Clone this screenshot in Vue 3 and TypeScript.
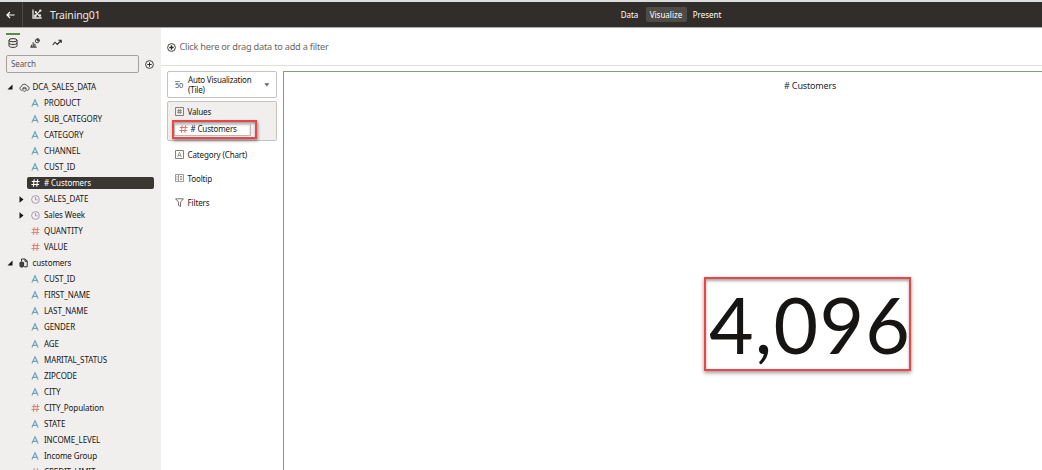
<script setup lang="ts">
interface Field {
  label: string
  kind: 'cloud' | 'file' | 'attr' | 'measure' | 'date'
  selected?: boolean
}

const fields: Field[] = [
  { label: 'DCA_SALES_DATA', kind: 'cloud' },
  { label: 'PRODUCT', kind: 'attr' },
  { label: 'SUB_CATEGORY', kind: 'attr' },
  { label: 'CATEGORY', kind: 'attr' },
  { label: 'CHANNEL', kind: 'attr' },
  { label: 'CUST_ID', kind: 'attr' },
  { label: '# Customers', kind: 'measure', selected: true },
  { label: 'SALES_DATE', kind: 'date' },
  { label: 'Sales Week', kind: 'date' },
  { label: 'QUANTITY', kind: 'measure' },
  { label: 'VALUE', kind: 'measure' },
  { label: 'customers', kind: 'file' },
  { label: 'CUST_ID', kind: 'attr' },
  { label: 'FIRST_NAME', kind: 'attr' },
  { label: 'LAST_NAME', kind: 'attr' },
  { label: 'GENDER', kind: 'attr' },
  { label: 'AGE', kind: 'attr' },
  { label: 'MARITAL_STATUS', kind: 'attr' },
  { label: 'ZIPCODE', kind: 'attr' },
  { label: 'CITY', kind: 'attr' },
  { label: 'CITY_Population', kind: 'measure' },
  { label: 'STATE', kind: 'attr' },
  { label: 'INCOME_LEVEL', kind: 'attr' },
  { label: 'Income Group', kind: 'attr' },
  { label: 'CREDIT_LIMIT', kind: 'measure' },
]
const isRoot = (f: Field) => f.kind === 'cloud' || f.kind === 'file'
</script>

<template>
  <div class="app">
    <header class="bar">
      <div class="back">
        <svg width="9" height="8" viewBox="0 0 9 8"><path d="M8.6 4H1M4 1 1 4l3 3" fill="none" stroke="#fff" stroke-width="1.2" /></svg>
      </div>
      <svg class="logo" width="10" height="10" viewBox="0 0 10 10" fill="none" stroke="#e8e6e4">
        <path d="M1 .5V9h8.7" stroke-width="1.3" />
        <path d="M2.6 7.4 8.4 1.6M4 3.6l3.6 3.6" stroke-width="1.2" />
        <circle cx="8.3" cy="1.6" r="1.2" fill="#e8e6e4" stroke="none" /><circle cx="3.8" cy="3.2" r="1.1" fill="#e8e6e4" stroke="none" /><circle cx="7.9" cy="6.6" r="1.3" fill="#e8e6e4" stroke="none" /><circle cx="3.3" cy="6.8" r="1.4" fill="#e8e6e4" stroke="none" />
      </svg>
      <h1>Training01</h1>
      <nav>
        <span class="n1">Data</span><span class="active">Visualize</span><span class="n3">Present</span>
      </nav>
    </header>
    <div class="body">
      <aside class="side">
        <div class="tabs">
          <div class="tab on">
            <svg width="10" height="10" viewBox="0 0 10 10" fill="none" stroke="#312d2a"><ellipse cx="5" cy="2.2" rx="4" ry="1.6" /><path d="M1 2.2v5.6C1 9.9 9 9.9 9 7.8V2.2M1 5c0 2 8 2 8 0" /></svg>
          </div>
          <div class="tab">
            <svg width="10" height="10" viewBox="0 0 10 10" fill="none" stroke="#4a4643"><path d="M.3 9.2h6.4M1.5 9V6.8M3.2 9V4.2M4.9 9V5.8" stroke-width="1.2" /><circle cx="7.2" cy="2.9" r="1.9" /><path d="M7.2.6v2.3h2.3A2.3 2.3 0 0 0 7.2.6" fill="#4a4643" /></svg>
          </div>
          <div class="tab">
            <svg width="10" height="8" viewBox="0 0 10 8" fill="none" stroke="#312d2a" stroke-width="1.1"><path d="M.7 6 3 3.2l2.3 2.2L9 1.5M6.4 1.3h2.8v2.8" /></svg>
          </div>
        </div>
        <div class="search">
          <div class="box">Search</div>
          <svg width="9" height="9" viewBox="0 0 9 9" fill="none" stroke="#312d2a"><circle cx="4.5" cy="4.5" r="3.9" stroke-width=".9" /><path d="M4.5 2.3v4.4M2.3 4.5h4.4" /></svg>
        </div>
        <ul class="tree">
          <li v-for="(f, i) in fields" :key="i" :class="{ root: isRoot(f), sel: f.selected }">
            <span class="arrow">
              <svg v-if="isRoot(f)" width="6" height="6" viewBox="0 0 6 6"><path d="M5.5.5v5h-5z" fill="#161513" /></svg>
              <svg v-else-if="f.kind === 'date'" width="5" height="7" viewBox="0 0 5 7"><path d="M.5.3v6.4L4.5 3.5z" fill="#161513" /></svg>
            </span>
            <span class="icon">
              <svg v-if="f.kind === 'cloud'" width="11" height="9" viewBox="0 0 11 9" fill="none" stroke="#4a4643" stroke-width=".9"><path d="M3 7.3h-.5a1.9 1.9 0 0 1-.2-3.7 3.1 3.1 0 0 1 5.9-.6 2.2 2.2 0 0 1 .4 4.3H8" /><ellipse cx="5.5" cy="5" rx="1.6" ry=".7" /><path d="M3.9 5v2.5c0 1 3.2 1 3.2 0V5" /></svg>
              <svg v-else-if="f.kind === 'file'" width="9" height="10" viewBox="0 0 9 10" fill="none" stroke="#312d2a"><path d="M2.5 3.3V1h3.7l2 2v5.8H5M6 1v2.3h2.2" /><ellipse cx="2.8" cy="4.8" rx="1.8" ry=".8" /><path d="M1 4.8v3.4c0 1.2 3.6 1.2 3.6 0V4.8z" fill="#4a4643" /></svg>
              <svg v-else-if="f.kind === 'attr'" width="8" height="8" viewBox="0 0 8 8"><path d="M.9 7.6 4 .7l3.1 6.9M2 5.3h4" fill="none" stroke="#6ba3bd" stroke-width="1.15" /></svg>
              <svg v-else-if="f.kind === 'measure'" width="9" height="8" viewBox="0 0 9 8"><path d="M3.2.3 2.4 7.7M6.6.3 5.8 7.7M.8 2.5h7.7M.4 5.5h7.7" fill="none" :stroke="f.selected ? '#fff' : '#df8277'" stroke-width="1.1" /></svg>
              <svg v-else width="9" height="9" viewBox="0 0 9 9" fill="none" stroke="#a98bb5" stroke-width=".9"><circle cx="4.5" cy="4.5" r="3.9" /><path d="M4.5 2v2.8h2.2" /></svg>
            </span>
            <span class="label">{{ f.label }}</span>
          </li>
        </ul>
      </aside>
      <main>
        <div class="filter">
          <svg width="9" height="9" viewBox="0 0 9 9" fill="none" stroke="#312d2a"><circle cx="4.5" cy="4.5" r="3.9" stroke-width=".9" /><path d="M4.5 2.3v4.4M2.3 4.5h4.4" stroke-width="1.3" /></svg>
          <span>Click here or drag data to add a filter</span>
        </div>
        <div class="work">
          <section class="grammar">
            <div class="viz">
              <span class="fifty">50</span>
              <span class="vtext">Auto Visualization<br />(Tile)</span>
              <svg width="6" height="4" viewBox="0 0 6 4"><path d="M.3.3h5L2.8 3.5z" fill="#6b6663" /></svg>
            </div>
            <div class="values">
              <div class="edge">
                <svg width="9" height="9" viewBox="0 0 9 9" fill="none" stroke="#85807d"><path d="M.5.5h8v8h-8z" /><path d="M3.7 2.2v4.6M5.4 2.2v4.6M2.2 3.6h4.6M2.2 5.4h4.6" stroke-width=".9" /></svg>
                <span>Values</span>
              </div>
              <div class="callout">
                <div class="pill">
                  <svg width="9" height="8" viewBox="0 0 9 8"><path d="M3.2.3 2.4 7.7M6.6.3 5.8 7.7M.8 2.5h7.7M.4 5.5h7.7" fill="none" stroke="#df7468" /></svg>
                  <span># Customers</span>
                </div>
              </div>
            </div>
            <div class="edge out">
              <svg width="9" height="9" viewBox="0 0 9 9" fill="none" stroke="#85807d"><path d="M.5.5h8v8h-8z" /><path d="m2.6 7 1.9-4.8L6.4 7M3.2 5.5h2.6" stroke-width=".8" /></svg>
              <span>Category (Chart)</span>
            </div>
            <div class="edge out">
              <svg width="9" height="8" viewBox="0 0 9 8" fill="none" stroke="#85807d"><path d="M.5.5h8v7h-8zM3.5 1v6M5 2.5h2.2M5 4h2.2M5 5.5h2.2M1.5 2.5h1M1.5 4h1M1.5 5.5h1" stroke-width=".8" /></svg>
              <span>Tooltip</span>
            </div>
            <div class="edge out">
              <svg width="9" height="9" viewBox="0 0 9 9"><path d="M.6.8h7.8L5.5 4.2v4.3L3.5 7.3V4.2z" fill="none" stroke="#68635f" stroke-width=".9" /></svg>
              <span>Filters</span>
            </div>
          </section>
          <section class="canvas">
            <h2># Customers</h2>
            <div class="tile">4,096</div>
          </section>
        </div>
      </main>
    </div>
  </div>
</template>

<style>
body { margin: 0; overflow: hidden; }
</style>

<style scoped>
* { box-sizing: border-box; }
svg { display: block; flex: none; }
.app { width: 1042px; height: 470px; overflow: hidden; display: flex; flex-direction: column; background: #fff; font-family: "Noto Sans", "Open Sans", sans-serif; font-size: 8px; letter-spacing: -.09px; color: #161513; white-space: nowrap; }
.bar { height: 28px; flex: none; background: #312d2a; border-top: 2px solid #dcdddd; border-bottom: 1px solid #aaa8a5; display: flex; align-items: center; color: #fff; }
.back { width: 23px; height: 25px; border-right: 1px solid #4b4744; display: flex; align-items: center; padding-left: 6px; }
.logo { margin: -1px 0 0 9px; }
h1 { margin: 0 0 0 8px; font-size: 10.5px; font-weight: 400; width: 50px; color: #eceae8; letter-spacing: -.18px; }
nav { display: flex; align-items: center; margin-left: 513.5px; height: 15px; line-height: 15px; text-align: center; letter-spacing: 0; }
nav span { flex: none; }
.n1 { width: 32px; }
.active { width: 41px; background: #4f4b48; border-radius: 2px; }
.n3 { width: 41px; }
.body { display: flex; flex: 1; min-height: 0; }
.side { width: 161px; flex: none; background: #f1efed; overflow: hidden; }
.tabs { display: flex; padding: 5px 0 0 6px; height: 27px; gap: 8px; }
.tab { width: 14px; height: 18px; display: flex; justify-content: center; align-items: center; border-top: 2px solid transparent; }
.tab.on { border-color: #5c8a4c; }
.search { display: flex; align-items: center; gap: 6px; padding-left: 6px; }
.box { width: 133px; height: 18px; border: 1px solid #a3a09d; border-radius: 2px; padding-left: 4px; line-height: 16px; color: #5c5855; letter-spacing: -.1px; }
.tree { list-style: none; margin: 6px 0 0; padding: 0; }
li { height: 16.04px; display: flex; align-items: center; }
.arrow { width: 12px; margin-left: 19px; display: flex; flex: none; }
.root .arrow { margin-left: 7px; }
.icon { width: 13px; display: flex; flex: none; }
.root .icon { width: 13.5px; }
.sel .label { color: #fff; }
.sel { background: #3a3632; border-radius: 2px; height: 12px; margin: 2px 7px 2.04px 27px; }
.sel .arrow { margin-left: 0; width: 4px; }
.label { margin-top: -1px; }
main { flex: 1; min-width: 0; display: flex; flex-direction: column; }
.filter { height: 38px; border-bottom: 1px solid #dddfda; display: flex; align-items: center; padding-left: 6px; gap: 4px; font-size: 9.2px; letter-spacing: -.23px; color: #6b6663; }
.filter svg { margin-top: 2px; }
.filter span { margin-left: -.5px; }
.work { display: flex; flex: 1; padding: 5px 0 0 6px; }
.grammar { width: 110px; flex: none; margin-right: 6px; }
.viz { height: 27px; border: 1px solid #c5c2bf; border-radius: 2px; display: flex; align-items: center; padding-left: 7px; line-height: 10px; letter-spacing: -.2px; }
.fifty { font-size: 7.5px; width: 11px; height: 8px; line-height: 8px; margin: 0 2px 0 0; color: #4e4a47; background: linear-gradient(#8d8986, #8d8986) 0 0 / 5px 1px no-repeat; }
.vtext { width: 76px; }
.values { margin-top: 3px; height: 40px; border: 1px solid #c5c2bf; border-radius: 2px; background: #f1efed; padding: 2.5px 0 0 4px; }
.edge { display: flex; align-items: center; height: 14px; padding-left: 2.5px; gap: 4px; letter-spacing: -.13px; }
.callout { width: 85px; height: 19px; margin-top: 1.5px; border: 2px solid #ee4444; box-shadow: 1px 2px 3px rgba(0,0,0,.4), inset 0 2px 2px rgba(0,0,0,.3); }
.pill { width: 77px; height: 14px; border: 1px solid #bbb8b5; border-top-color: #aaa; background: #fff; box-shadow: inset 0 2px 2px rgba(0,0,0,.25); display: flex; align-items: center; padding: 0 0 1px 4px; gap: 2.5px; letter-spacing: -.15px; }
.out { padding-left: 7.5px; height: 24px; }
.values + .out { margin-top: 1px; }
.canvas { flex: 1; border-top: 1px solid #849d7c; border-left: 1px solid #849d7c; display: flex; flex-direction: column; padding-left: 420px; }
h2 { margin: 7px 0 0 80px; font-size: 9px; line-height: 13px; font-weight: 400; letter-spacing: -.15px; color: #2a2826; }
.tile { width: 207px; height: 94px; margin-top: 185px; border: 2px solid #f04444; box-shadow: 0 2px 4px rgba(0,0,0,.4), inset 0 2px 3px rgba(0,0,0,.35); font-family: Lato, "Noto Sans", sans-serif; font-size: 77px; letter-spacing: 1.2px; line-height: 90px; padding-left: 3px; color: #161513; }
</style>
